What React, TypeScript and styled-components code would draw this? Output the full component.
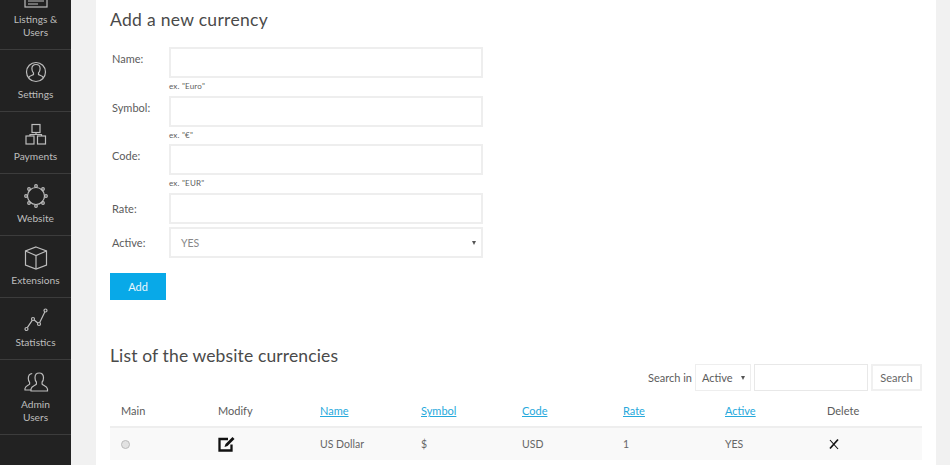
import React from "react";
import styled, { createGlobalStyle } from "styled-components";

const GlobalStyle = createGlobalStyle`
  html, body {
    margin: 0;
    padding: 0;
    height: 465px;
    overflow: hidden;
    background: #f1f1f1;
    font-family: "Lato", "Open Sans", sans-serif;
    color: #555;
  }
  * {
    box-sizing: border-box;
  }
`;

const Page = styled.div`
  display: flex;
  height: 465px;
  overflow: hidden;
`;

const Sidebar = styled.nav`
  width: 71px;
  flex-shrink: 0;
  background: #222;
  height: 465px;
  overflow: hidden;
`;

const SideList = styled.div`
  margin-top: -25px;
`;

const SideItem = styled.a<{ $tall?: boolean }>`
  display: flex;
  flex-direction: column;
  align-items: center;
  height: ${(p) => (p.$tall ? 75 : 62)}px;
  padding-top: 9px;
  border-bottom: 1px solid #3c3c3c;
  color: #bdbdbd;
  font-size: 10.2px;
  line-height: 13px;
  text-align: center;
  svg {
    display: block;
    margin-bottom: 3px;
  }
`;

const Panel = styled.main`
  width: 840px;
  margin-left: 25px;
  height: 465px;
  background: #fff;
  padding: 8px 14px 0;
  overflow: hidden;
`;

const Heading = styled.h2`
  margin: 0;
  font-size: 17.5px;
  line-height: 24px;
  font-weight: 400;
  color: #4a4a4a;
  letter-spacing: 0.3px;
`;

const Form = styled.form`
  width: 372px;
  margin-top: 15px;
`;

const Row = styled.div<{ $gap: number }>`
  display: grid;
  grid-template-columns: 59px 314px;
  margin-bottom: ${(p) => p.$gap}px;
`;

const Label = styled.label<{ $center?: boolean }>`
  padding: ${(p) => (p.$center ? "7.5px" : "4px")} 0 0 2px;
  font-size: 11px;
  line-height: 15px;
  color: #5c5c5c;
`;

const TextInput = styled.input`
  display: block;
  width: 314px;
  height: 31px;
  border: 2px solid #eee;
  background: #fff;
  outline: none;
`;

const Hint = styled.div`
  font-size: 8px;
  line-height: 11px;
  margin-top: 3px;
  color: #5c5c5c;
  letter-spacing: 0.2px;
`;

const SelectBox = styled.div`
  display: flex;
  align-items: center;
  justify-content: space-between;
  width: 314px;
  height: 31px;
  border: 2px solid #eee;
  padding: 0 5px 0 10px;
  font-size: 10.5px;
  color: #888;
`;

const Caret = styled.span`
  width: 0;
  height: 0;
  border-left: 2.5px solid transparent;
  border-right: 2.5px solid transparent;
  border-top: 4px solid #555;
`;

const AddButton = styled.button`
  display: block;
  width: 56px;
  height: 27px;
  margin-top: 15px;
  border: none;
  background: #08a9e8;
  color: #e8f7fd;
  font-family: inherit;
  font-size: 11px;
`;

const ListHeading = styled(Heading)`
  margin-top: 44px;
  letter-spacing: 0.13px;
`;

const SearchBar = styled.div`
  display: flex;
  justify-content: flex-end;
  align-items: center;
  gap: 3px;
  margin-top: -4px;
  height: 27px;
  font-size: 11px;
  color: #5c5c5c;
`;

const SearchSelect = styled.div`
  display: flex;
  align-items: center;
  justify-content: space-between;
  width: 56px;
  height: 27px;
  border: 1px solid #eee;
  padding: 0 5px 0 6px;
`;

const SearchInput = styled.input`
  width: 114px;
  height: 27px;
  border: 1px solid #e8e8e8;
  outline: none;
`;

const SearchButton = styled.button`
  width: 51px;
  height: 27px;
  border: 2px solid #f0f0f0;
  background: #fff;
  color: #666;
  font-family: inherit;
  font-size: 11px;
`;

const columns = "108px 102px 101px 101px 101px 102px 102px 95px";

const HeadRow = styled.div`
  display: grid;
  grid-template-columns: ${columns};
  align-items: center;
  height: 35px;
  padding-top: 4px;
  font-size: 11px;
  color: #5c5c5c;
`;

const DataRow = styled.div`
  display: grid;
  grid-template-columns: ${columns};
  align-items: center;
  height: 34px;
  background: #f9f9f9;
  border-top: 2px solid #eee;
  font-size: 10.5px;
  color: #666;
`;

const Cell = styled.div<{ $first?: boolean }>`
  padding-left: ${(p) => (p.$first ? "11px" : "0")};
  display: flex;
  align-items: center;
`;

const SortLink = styled.a`
  color: #27a9dc;
  text-decoration: underline;
`;

const Radio = styled.span`
  width: 9px;
  height: 9px;
  border-radius: 50%;
  background: #e2e2e2;
  border: 1px solid #bbb;
`;

const NavIcon = ({ children }: { children: React.ReactNode }) => (
  <svg width="26" height="26" viewBox="0 0 26 26" fill="none" stroke="#bdbdbd" strokeWidth="1.2">
    {children}
  </svg>
);

const items = [
  {
    label: ["Listings &", "Users"],
    tall: true,
    icon: (
      <>
        <rect x="2" y="3" width="22" height="20" />
        <path d="M5 17h16M5 20h10" />
      </>
    ),
  },
  {
    label: ["Settings"],
    icon: (
      <>
        <circle cx="13" cy="13" r="9.5" />
        <path d="M5.500 19c1-2.500 3.500-2.500 5-3.500v-1.500c-1-1-1.600-2.500-1.600-4.500 0-2.500 1.700-4 4.100-4s4.100 1.500 4.100 4c0 2-.6 3.500-1.600 4.500v1.500c1.500 1 4 1 5 3.500" />
      </>
    ),
  },
  {
    label: ["Payments"],
    icon: (
      <>
        <rect x="9" y="3.500" width="8" height="8" />
        <rect x="3" y="15" width="8" height="8" />
        <rect x="14.500" y="15" width="8" height="8" />
        <path d="M13 11.500v2H7v1.500M13 13.500h5.500V15" />
      </>
    ),
  },
  {
    label: ["Website"],
    icon: (
      <>
        <circle cx="13" cy="13" r="8.500" />
        <circle cx="13" cy="3" r="1.300" />
        <circle cx="13" cy="23" r="1.300" />
        <circle cx="3" cy="13" r="1.300" />
        <circle cx="23" cy="13" r="1.300" />
        <circle cx="6" cy="6" r="1.300" />
        <circle cx="20" cy="6" r="1.300" />
        <circle cx="6" cy="20" r="1.300" />
        <circle cx="20" cy="20" r="1.300" />
      </>
    ),
  },
  {
    label: ["Extensions"],
    icon: (
      <>
        <path d="M13 2l10.500 4v14L13 24 2.500 20V6z" />
        <path d="M2.500 6L13 10.500 23.500 6M13 10.500V24" />
      </>
    ),
  },
  {
    label: ["Statistics"],
    icon: (
      <>
        <circle cx="3.500" cy="22" r="1.500" />
        <circle cx="10" cy="12" r="1.500" />
        <circle cx="16" cy="17" r="1.500" />
        <circle cx="22.500" cy="3.500" r="1.500" />
        <path d="M4.300 20.700L9.200 13.300M11.200 13L14.800 16M16.700 15.600L21.800 5" />
      </>
    ),
  },
  {
    label: ["Admin", "Users"],
    tall: true,
    icon: (
      <>
        <path d="M9.200 4.500C6.800 4.800 5.300 6.500 5.300 9.200c0 2 .5 3.300 1.300 4.200v1.800c-1.200 1.300-4.100 1.500-4.600 4.300v1.500h6" />
        <path d="M16.200 4c-2.700 0-4.200 1.800-4.200 4.700 0 2 .5 3.400 1.400 4.300v2.200c-1.200 1.500-4.900 1.800-5.400 4.800v2h16.500v-2c-.5-3-4.200-3.300-5.400-4.800V13c.9-.9 1.400-2.300 1.400-4.300 0-2.900-1.500-4.700-4.300-4.700z" />
      </>
    ),
  },
];

const fields = [
  { label: "Name:", hint: 'ex. "Euro"', gap: 4 },
  { label: "Symbol:", hint: 'ex. "€"', gap: 3 },
  { label: "Code:", hint: 'ex. "EUR"', gap: 4 },
];

const App = () => {
  return (
    <Page>
      <GlobalStyle />
      <Sidebar>
        <SideList>
          {items.map((item) => (
            <SideItem key={item.label[0]} $tall={item.tall}>
              <NavIcon>{item.icon}</NavIcon>
              {item.label.map((line) => (
                <span key={line}>{line}</span>
              ))}
            </SideItem>
          ))}
        </SideList>
      </Sidebar>
      <Panel>
        <Heading>Add a new currency</Heading>
        <Form>
          {fields.map((f) => (
            <Row key={f.label} $gap={f.gap}>
              <Label>{f.label}</Label>
              <div>
                <TextInput />
                <Hint>{f.hint}</Hint>
              </div>
            </Row>
          ))}
          <Row $gap={3}>
            <Label $center>Rate:</Label>
            <TextInput />
          </Row>
          <Row $gap={0}>
            <Label $center>Active:</Label>
            <SelectBox>
              YES
              <Caret />
            </SelectBox>
          </Row>
          <AddButton type="button">Add</AddButton>
        </Form>
        <ListHeading>List of the website currencies</ListHeading>
        <SearchBar>
          Search in
          <SearchSelect>
            Active
            <Caret />
          </SearchSelect>
          <SearchInput />
          <SearchButton type="button">Search</SearchButton>
        </SearchBar>
        <HeadRow>
          <Cell $first>Main</Cell>
          <Cell>Modify</Cell>
          <Cell><SortLink>Name</SortLink></Cell>
          <Cell><SortLink>Symbol</SortLink></Cell>
          <Cell><SortLink>Code</SortLink></Cell>
          <Cell><SortLink>Rate</SortLink></Cell>
          <Cell><SortLink>Active</SortLink></Cell>
          <Cell>Delete</Cell>
        </HeadRow>
        <DataRow>
          <Cell $first><Radio /></Cell>
          <Cell>
            <svg width="18" height="16" viewBox="0 0 18 16" fill="none">
              <path d="M13.500 8.500V14.500H1.500V3H10" stroke="#111" strokeWidth="2.300" />
              <path d="M6.500 11l1-3L14.500 1l2 2-7 7z" fill="#111" />
            </svg>
          </Cell>
          <Cell>US Dollar</Cell>
          <Cell>$</Cell>
          <Cell>USD</Cell>
          <Cell>1</Cell>
          <Cell>YES</Cell>
          <Cell>
            <svg width="14" height="14" viewBox="0 0 14 14" fill="none" stroke="#111">
              <path d="M3 3l8 9" strokeWidth="1.100" />
              <path d="M11 2.500L3 11.500" strokeWidth="1.700" />
            </svg>
          </Cell>
        </DataRow>
      </Panel>
    </Page>
  );
};

export default App;
